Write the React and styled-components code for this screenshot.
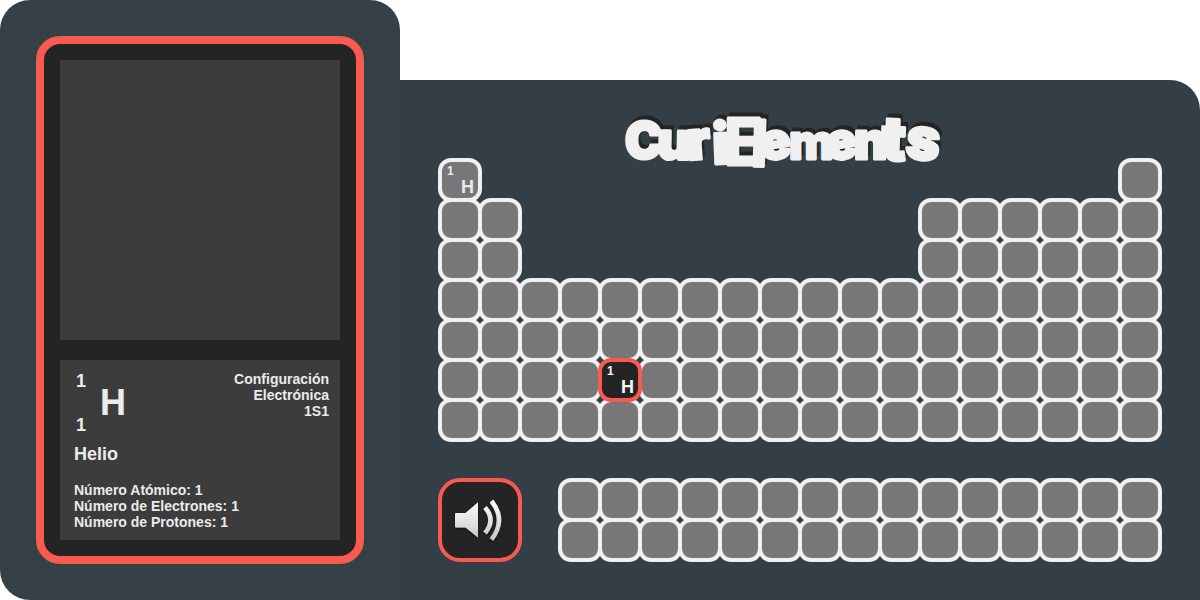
import React, { useState } from "react";
import styled, { createGlobalStyle, css } from "styled-components";

const GlobalStyle = createGlobalStyle`
  *, *::before, *::after { box-sizing: border-box; }
  body {
    margin: 0;
    background: #ffffff;
    font-family: "Liberation Sans", Arial, sans-serif;
    font-weight: 700;
    color: #ebebeb;
  }
`;

const Device = styled.main`
  display: grid;
  grid-template-columns: minmax(0, 1fr) minmax(0, 2fr);
`;

const DetailPanel = styled.aside`
  padding: 36px;
  border-radius: 30px 30px 0 30px;
  background: #364147;
`;

const TablePanel = styled.section`
  margin-top: 80px;
  padding: 24px 40px 40px;
  border-radius: 0 30px 0 0;
  background: #343f45;
`;

const Screen = styled.div`
  display: flex;
  flex-direction: column;
  gap: 20px;
  height: 100%;
  padding: 16px;
  border: 8px solid #f75a4f;
  border-radius: 24px;
  background: #242424;
`;

const Viewer = styled.div`
  aspect-ratio: 1;
  background: #3c3c3c;
`;

const Info = styled.article`
  flex: 1;
  padding: 11px 11px 10px 14px;
  background: #3c3c3c;
  font-size: 14px;
  line-height: 16px;
`;

const InfoTop = styled.div`
  display: flex;
  justify-content: space-between;
`;

const Identity = styled.div`
  display: flex;
  align-items: center;
  gap: 14px;
  padding-left: 2px;
`;

const Numbers = styled.div`
  display: flex;
  flex-direction: column;
  justify-content: space-between;
  height: 64px;
  font-size: 18px;
  line-height: 20px;
`;

const BigSymbol = styled.span`
  font-size: 36px;
  line-height: 40px;
`;

const Configuration = styled.p`
  width: 100px;
  margin: 0;
  text-align: right;
`;

const Name = styled.h2`
  margin: 9px 0 18px;
  font-size: 18px;
  line-height: 20px;
`;

const Facts = styled.ul`
  margin: 0;
  padding: 0;
  list-style: none;
`;

const Title = styled.h1`
  display: flex;
  justify-content: center;
  height: 56px;
  margin: 0;
`;

const Wordmark = styled.svg`
  display: block;
  width: 360px;
  height: 80px;
  flex: none;
  font-family: Inter, "Open Sans", sans-serif;
  stroke-linejoin: round;
`;

const ElementGrid = styled.div`
  display: grid;
  grid-template-columns: repeat(${(p) => p.$columns}, minmax(0, 1fr));
  flex: ${(p) => p.$columns};
`;

const Cell = styled.button`
  position: relative;
  display: flex;
  flex-direction: column;
  justify-content: space-between;
  align-items: flex-start;
  aspect-ratio: 1;
  min-width: 0;
  margin: -2px;
  padding: 4px 4px 1px 5px;
  grid-column: ${(p) => p.$col};
  grid-row: ${(p) => p.$row};
  border: 4px solid #f0f0f0;
  border-radius: 13px;
  background: #777777;
  color: #ebebeb;
  font: inherit;
  cursor: pointer;
  ${(p) =>
    p.$selected &&
    css`
      z-index: 1;
      border-color: #f75a4f;
      background: #242424;
      color: #f5f5f5;
    `}
`;

const CellNumber = styled.span`
  font-size: 12px;
  line-height: 10px;
`;

const CellSymbol = styled.span`
  align-self: flex-end;
  font-size: 18px;
  line-height: 20px;
`;

const BottomRow = styled.div`
  display: flex;
  align-items: flex-start;
  margin-top: 40px;
`;

const SoundSlot = styled.div`
  display: flex;
  flex: 2;
`;

const Spacer = styled.div`
  flex: 1;
`;

const SoundButton = styled.button`
  display: flex;
  align-items: center;
  justify-content: center;
  flex: 1;
  aspect-ratio: 1;
  margin: -2px;
  padding: 0;
  border: 4px solid #f75a4f;
  border-radius: 22px;
  background: #242424;
  cursor: pointer;
  svg { flex: none; width: 72px; height: 72px; }
`;

const mainCells = [];
for (let row = 1; row <= 7; row += 1) {
  for (let col = 1; col <= 18; col += 1) {
    const filled =
      row === 1 ? col === 1 || col === 18 : row <= 3 ? col <= 2 || col >= 13 : true;
    if (filled) mainCells.push({ row, col });
  }
}

const seriesCells = [];
for (let row = 1; row <= 2; row += 1) {
  for (let col = 1; col <= 15; col += 1) seriesCells.push({ row, col });
}

const letters = [
  { char: "C", x: 5, y: 54, size: 50, turn: 0 },
  { char: "u", x: 37, y: 55, size: 52, turn: 1 },
  { char: "r", x: 68, y: 56, size: 54, turn: -4 },
  { char: "i", x: 93, y: 60, size: 56, turn: -2 },
  { char: "E", x: 104, y: 61, size: 64, turn: 0, weight: 700 },
  { char: "l", x: 130, y: 62, size: 64, turn: 2, weight: 700 },
  { char: "e", x: 142, y: 57, size: 51, turn: -8 },
  { char: "m", x: 169, y: 55, size: 48, turn: 0, weight: 800 },
  { char: "e", x: 208, y: 57, size: 51, turn: -8 },
  { char: "n", x: 234, y: 55, size: 51, turn: 0 },
  { char: "t", x: 261, y: 56, size: 61, turn: 2 },
  { char: "s", x: 284, y: 53, size: 58, turn: 8 },
];

function LetterRun({ color }) {
  return (
    <g fill={color} stroke={color} strokeWidth="3">
      {letters.map((l, i) => (
        <text
          key={i}
          x={l.x}
          y={l.y}
          fontSize={l.size}
          fontWeight={l.weight || 900}
          transform={`rotate(${l.turn} ${l.x} ${l.y})`}
        >
          {l.char}
        </text>
      ))}
    </g>
  );
}

function Logo() {
  return (
    <Wordmark viewBox="0 0 360 80" role="img" aria-label="CuriElements">
      <g transform="translate(2 -4)" aria-hidden="true">
        <LetterRun color="#242424" />
      </g>
      <LetterRun color="#f0f0f0" />
    </Wordmark>
  );
}

function SpeakerIcon() {
  return (
    <svg viewBox="0 0 72 72" aria-hidden="true">
      <defs>
        <linearGradient id="metal" gradientUnits="userSpaceOnUse" x1="0" y1="16" x2="0" y2="57">
          <stop offset="0" stopColor="#ffffff" />
          <stop offset="1" stopColor="#c6c6c6" />
        </linearGradient>
        <filter id="drop" x="-20%" y="-20%" width="140%" height="140%">
          <feDropShadow dx="0" dy="1" stdDeviation="1" floodColor="#000000" floodOpacity="0.7" />
        </filter>
      </defs>
      <g filter="url(#drop)">
        <path d="M12 29h9.500L34 18.300v35.200L21.500 43.500H12q-1 0-1-1V30q0-1 1-1z" fill="url(#metal)" />
        <path
          d="M41 23.500Q52 36 41 49M47.500 17Q62.500 36 47.500 55.500"
          fill="none"
          stroke="url(#metal)"
          strokeWidth="4.500"
        />
      </g>
    </svg>
  );
}

function ElementCell({ row, col, symbol, number, selected, onSelect }) {
  return (
    <Cell
      type="button"
      $row={row}
      $col={col}
      $selected={selected}
      aria-pressed={selected}
      onClick={onSelect}
    >
      {symbol && <CellNumber>{number}</CellNumber>}
      {symbol && <CellSymbol>{symbol}</CellSymbol>}
    </Cell>
  );
}

export default function App() {
  const [selected, setSelected] = useState("main-6-5");

  const renderCells = (cells, group) =>
    cells.map(({ row, col }) => {
      const id = `${group}-${row}-${col}`;
      const active = id === selected;
      const shown = active || id === "main-1-1";
      return (
        <ElementCell
          key={id}
          row={row}
          col={col}
          symbol={shown ? "H" : ""}
          number={1}
          selected={active}
          onSelect={() => setSelected(id)}
        />
      );
    });

  return (
    <>
      <GlobalStyle />
      <Device>
        <DetailPanel>
          <Screen>
            <Viewer />
            <Info>
              <InfoTop>
                <Identity>
                  <Numbers>
                    <span>1</span>
                    <span>1</span>
                  </Numbers>
                  <BigSymbol>H</BigSymbol>
                </Identity>
                <Configuration>Configuración Electrónica 1S1</Configuration>
              </InfoTop>
              <Name>Helio</Name>
              <Facts>
                <li>Número Atómico: 1</li>
                <li>Número de Electrones: 1</li>
                <li>Número de Protones: 1</li>
              </Facts>
            </Info>
          </Screen>
        </DetailPanel>
        <TablePanel>
          <Title>
            <Logo />
          </Title>
          <ElementGrid $columns={18}>{renderCells(mainCells, "main")}</ElementGrid>
          <BottomRow>
            <SoundSlot>
              <SoundButton type="button" aria-label="Sonido">
                <SpeakerIcon />
              </SoundButton>
            </SoundSlot>
            <Spacer />
            <ElementGrid $columns={15}>{renderCells(seriesCells, "series")}</ElementGrid>
          </BottomRow>
        </TablePanel>
      </Device>
    </>
  );
}
